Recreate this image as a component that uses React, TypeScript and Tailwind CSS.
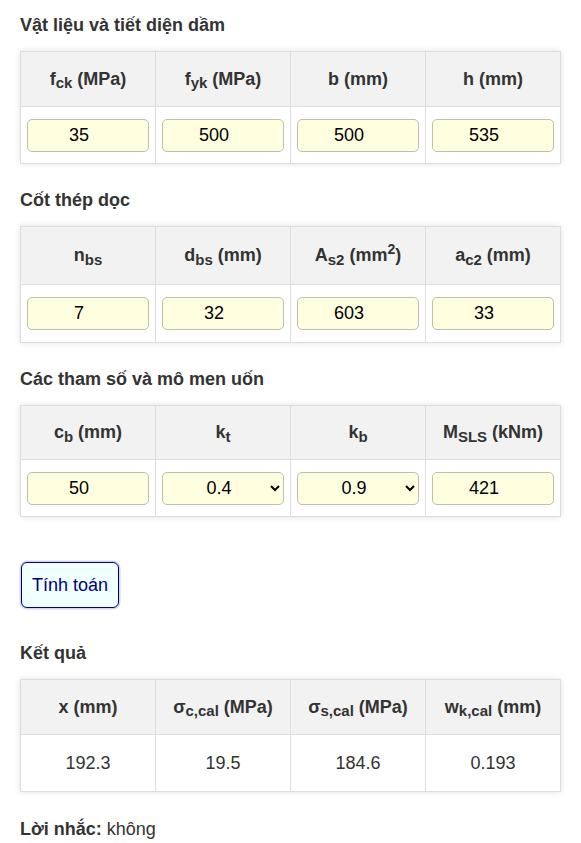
import React, { useState } from "react";

type Cell =
  | { kind: "input"; value: string }
  | { kind: "select"; value: string; options: string[] }
  | { kind: "text"; value: string };

interface Section {
  title: string;
  headers: React.ReactNode[];
  headH: string;
  rowH: string;
  cells: Cell[];
}

const sub = (s: string) => <sub className="text-[15px] leading-none">{s}</sub>;

const sections: Section[] = [
  {
    title: "Vật liệu và tiết diện dầm",
    headH: "h-[55px]",
    rowH: "h-[57px]",
    headers: [
      <>f{sub("ck")} (MPa)</>,
      <>f{sub("yk")} (MPa)</>,
      <>b (mm)</>,
      <>h (mm)</>,
    ],
    cells: [
      { kind: "input", value: "35" },
      { kind: "input", value: "500" },
      { kind: "input", value: "500" },
      { kind: "input", value: "535" },
    ],
  },
  {
    title: "Cốt thép dọc",
    headH: "h-[58px]",
    rowH: "h-[58px]",
    headers: [
      <>n{sub("bs")}</>,
      <>d{sub("bs")} (mm)</>,
      <>
        A{sub("s2")} (mm<sup className="text-[14px] leading-none">2</sup>)
      </>,
      <>a{sub("c2")} (mm)</>,
    ],
    cells: [
      { kind: "input", value: "7" },
      { kind: "input", value: "32" },
      { kind: "input", value: "603" },
      { kind: "input", value: "33" },
    ],
  },
  {
    title: "Các tham số và mô men uốn",
    headH: "h-[54px]",
    rowH: "h-[57px]",
    headers: [
      <>c{sub("b")} (mm)</>,
      <>k{sub("t")}</>,
      <>k{sub("b")}</>,
      <>M{sub("SLS")} (kNm)</>,
    ],
    cells: [
      { kind: "input", value: "50" },
      { kind: "select", value: "0.4", options: ["0.4", "0.6"] },
      { kind: "select", value: "0.9", options: ["0.9", "1.1"] },
      { kind: "input", value: "421" },
    ],
  },
];

const results: Section = {
  title: "Kết quả",
  headH: "h-[55px]",
  rowH: "h-[57px]",
  headers: [
    <>x (mm)</>,
    <>σ{sub("c,cal")} (MPa)</>,
    <>σ{sub("s,cal")} (MPa)</>,
    <>w{sub("k,cal")} (mm)</>,
  ],
  cells: [
    { kind: "text", value: "192.3" },
    { kind: "text", value: "19.5" },
    { kind: "text", value: "184.6" },
    { kind: "text", value: "0.193" },
  ],
};

function Field({ cell }: { cell: Cell }) {
  const [val, setVal] = useState(cell.value);
  const base =
    "w-full h-[33px] rounded-[5px] border border-[#bdbdb0] bg-[#ffffe0] text-[18px] text-black text-center outline-none";

  if (cell.kind === "select") {
    return (
      <select
        value={val}
        onChange={(e) => setVal(e.target.value)}
        className={`${base} pl-[10px] pr-[6px] [text-align-last:center]`}
      >
        {cell.options.map((o) => (
          <option key={o}>{o}</option>
        ))}
      </select>
    );
  }
  if (cell.kind === "text") {
    return <span className="text-[18px] text-[#333]">{cell.value}</span>;
  }
  // extra right padding leaves room where a number spinner would sit
  return (
    <input
      value={val}
      onChange={(e) => setVal(e.target.value)}
      className={`${base} pl-[4px] pr-[22px]`}
    />
  );
}

function DataTable({ s }: { s: Section }) {
  return (
    <table className="w-[541px] table-fixed border-collapse shadow-[0_0_6px_rgba(0,0,0,0.12)]">
      <thead>
        <tr className={s.headH}>
          {s.headers.map((h, i) => (
            <th
              key={i}
              className="border border-[#ddd] bg-[#f2f2f2] px-[6px] text-center align-middle text-[18px] font-bold text-[#333]"
            >
              {h}
            </th>
          ))}
        </tr>
      </thead>
      <tbody>
        <tr className={s.rowH}>
          {s.cells.map((c, i) => (
            <td key={i} className="border border-[#ddd] bg-white px-[6px] text-center align-middle">
              <Field cell={c} />
            </td>
          ))}
        </tr>
      </tbody>
    </table>
  );
}

function Heading({ children }: { children: React.ReactNode }) {
  return <h3 className="text-[18px] leading-[21px] font-bold text-[#333] mb-[15px]">{children}</h3>;
}

export default function App() {
  return (
    <div className="min-h-screen bg-white px-5 pt-[15px] pb-6 font-['Liberation_Sans',Arial,sans-serif] text-[#333]">
      {sections.map((s, i) => (
        <section key={s.title} className={i === 0 ? "" : "mt-[26px]"}>
          <Heading>{s.title}</Heading>
          <DataTable s={s} />
        </section>
      ))}

      <button
        autoFocus
        className="mt-[45px] ml-px rounded-[6px] border border-[#000080] bg-[#f0ffff] px-[10px] py-[11.5px] text-[18px] leading-[21px] text-[#000080] outline-none ring-[1.5px] ring-[#d4d4ee]"
      >
        Tính toán
      </button>

      <section className="mt-[35px]">
        <Heading>{results.title}</Heading>
        <DataTable s={results} />
      </section>

      <p className="mt-[27px] text-[18px] leading-[21px] text-[#333]">
        <b>Lời nhắc:</b> không
      </p>
    </div>
  );
}
